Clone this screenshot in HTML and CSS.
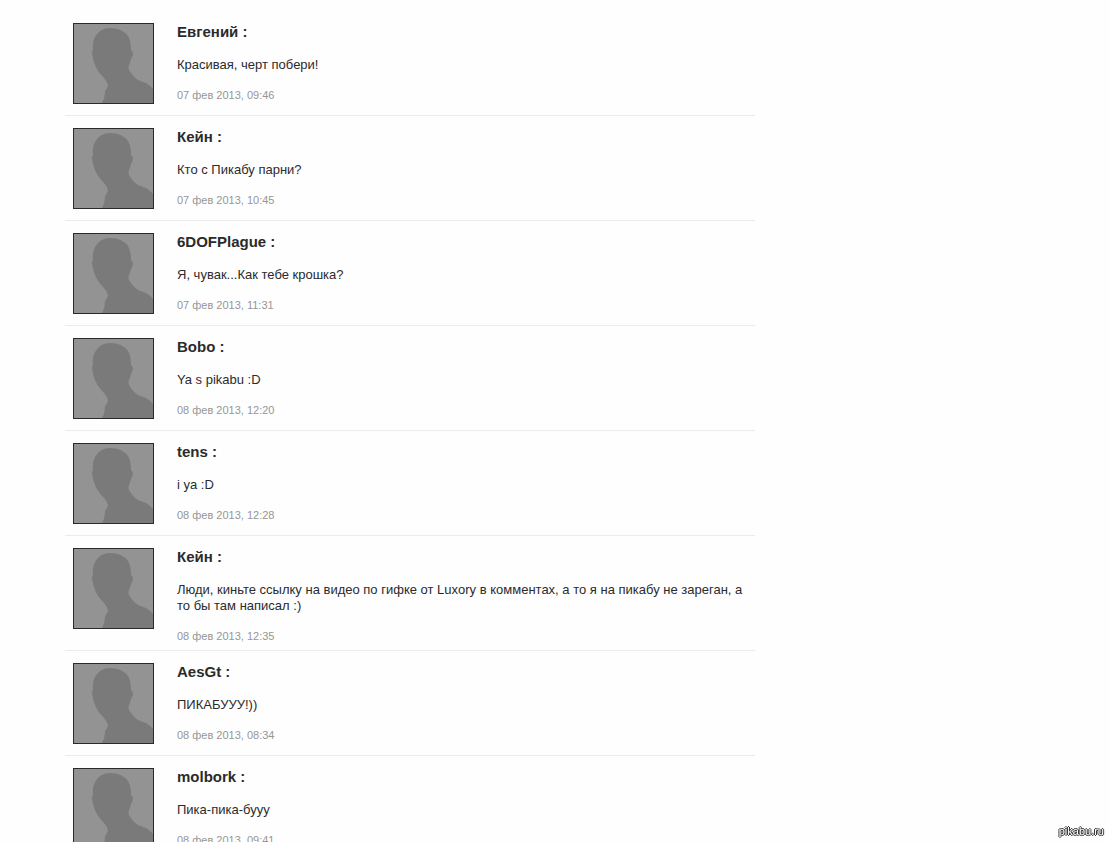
FILE: index.html
```html
<!DOCTYPE html>
<html lang="ru">
<head>
<meta charset="utf-8">
<title>Комментарии</title>
<link rel="stylesheet" href="styles.css">
</head>
<body>
<svg class="defs" aria-hidden="true">
  <symbol id="person" viewBox="0 0 79 79">
    <path d="M28 79Q31 74 31 67Q34 63 34 61Q33 57 30 54Q22 46 20 38Q19 36 19 34Q18 31 18 28L19 26Q18 19 21 13Q26 4 36 4Q48 4 54 12Q57 17 57 26Q59 27 59 30Q58 34 57 35Q56 39 55 41Q54 44 55 46Q59 53 64 56Q69 58 72 59Q77 62 79 65V79Z"/>
  </symbol>
</svg>
<main class="comments">
  <article class="comment">
    <svg class="avatar" role="img" aria-label="Аватар"><use href="#person"/></svg>
    <div class="body"><h2 class="name">Евгений :</h2><p class="text">Красивая, черт побери!</p><time class="date">07 фев 2013, 09:46</time></div>
  </article>
  <article class="comment">
    <svg class="avatar" role="img" aria-label="Аватар"><use href="#person"/></svg>
    <div class="body"><h2 class="name">Кейн :</h2><p class="text">Кто с Пикабу парни?</p><time class="date">07 фев 2013, 10:45</time></div>
  </article>
  <article class="comment">
    <svg class="avatar" role="img" aria-label="Аватар"><use href="#person"/></svg>
    <div class="body"><h2 class="name">6DOFPlague :</h2><p class="text">Я, чувак...Как тебе крошка?</p><time class="date">07 фев 2013, 11:31</time></div>
  </article>
  <article class="comment">
    <svg class="avatar" role="img" aria-label="Аватар"><use href="#person"/></svg>
    <div class="body"><h2 class="name">Bobo :</h2><p class="text">Ya s pikabu :D</p><time class="date">08 фев 2013, 12:20</time></div>
  </article>
  <article class="comment">
    <svg class="avatar" role="img" aria-label="Аватар"><use href="#person"/></svg>
    <div class="body"><h2 class="name">tens :</h2><p class="text">i ya :D</p><time class="date">08 фев 2013, 12:28</time></div>
  </article>
  <article class="comment">
    <svg class="avatar" role="img" aria-label="Аватар"><use href="#person"/></svg>
    <div class="body"><h2 class="name">Кейн :</h2><p class="text">Люди, киньте ссылку на видео по гифке от Luxory в комментах, а то я на пикабу не зареган, а то бы там написал :)</p><time class="date">08 фев 2013, 12:35</time></div>
  </article>
  <article class="comment">
    <svg class="avatar" role="img" aria-label="Аватар"><use href="#person"/></svg>
    <div class="body"><h2 class="name">AesGt :</h2><p class="text">ПИКАБУУУ!))</p><time class="date">08 фев 2013, 08:34</time></div>
  </article>
  <article class="comment">
    <svg class="avatar" role="img" aria-label="Аватар"><use href="#person"/></svg>
    <div class="body"><h2 class="name">molbork :</h2><p class="text">Пика-пика-бууу</p><time class="date">08 фев 2013, 09:41</time></div>
  </article>
</main>
<div class="watermark">pikabu.ru</div>
</body>
</html>
```

FILE: styles.css
```css
* { box-sizing: border-box; }
body {
  margin: 0;
  background: #fefefe;
  color: #2b2b2b;
  font-family: "Liberation Sans", Arial, sans-serif;
}
.defs { display: none; }
.comments {
  height: 100vh;
  overflow: hidden;
  max-width: 755px;
  padding: 11px 0 0 65px;
}
.comment {
  display: flex;
  gap: 23px;
  padding: 12px 8px 7px;
  border-bottom: 1px solid #ebebeb;
}
.avatar {
  flex: none;
  width: 81px;
  height: 81px;
  margin-bottom: 4px;
  border: 1px solid #2a2a2a;
  background: #939393;
  fill: #7a7a7a;
}
.body { flex: 1; min-width: 0; }
.name {
  margin: 0 0 16px;
  font-size: 15px;
  line-height: 18px;
}
.text {
  margin: 0 0 15px;
  font-size: 13px;
  line-height: 16px;
}
.date {
  display: block;
  font-size: 11px;
  line-height: 14px;
  color: #969696;
}
.watermark {
  position: fixed;
  right: 5px;
  bottom: 4px;
  font-size: 11px;
  line-height: 14px;
  color: #fff;
  text-shadow: 1px 0 #333, -1px 0 #333, 0 1px #333, 0 -1px #333;
}
```
